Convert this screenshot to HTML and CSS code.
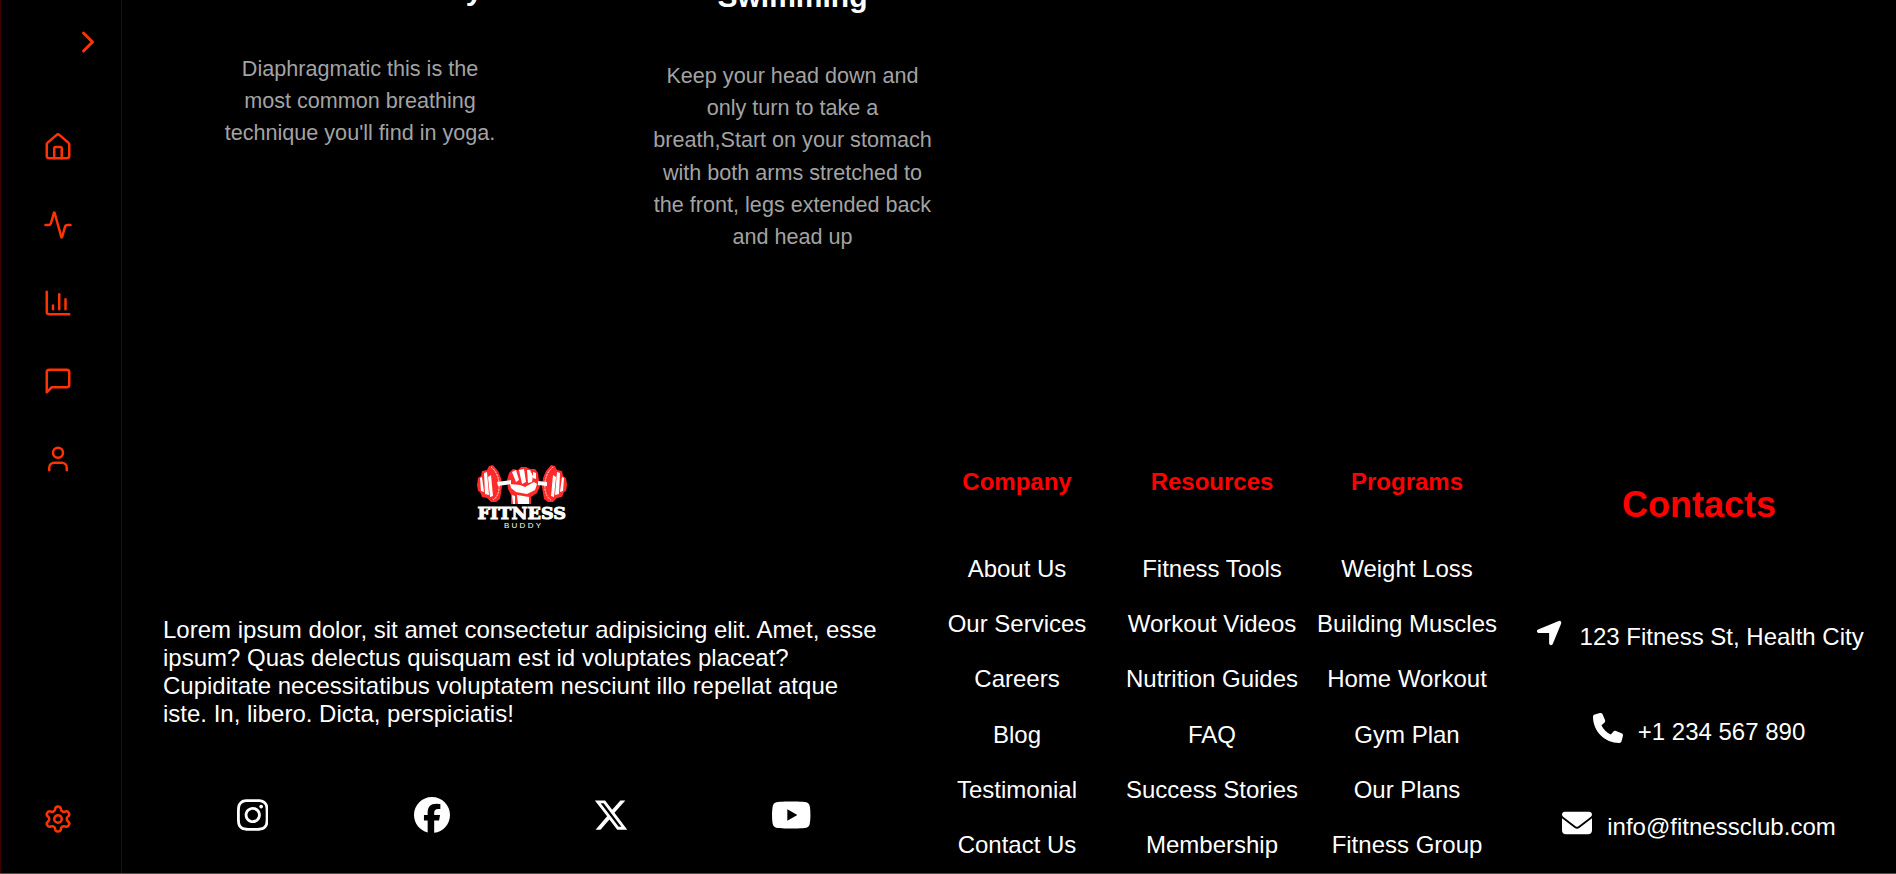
FILE: index.html
```html
<!DOCTYPE html>
<html lang="en">
<head>
<meta charset="utf-8">
<title>Fitness Buddy</title>
<link rel="stylesheet" href="styles.css">
</head>
<body>
<div class="app">
  <nav class="sidebar">
    <a class="toggle"><svg class="chevron" viewBox="0 0 24 24"><path d="m9 18 6-6-6-6"/></svg></a>
    <div class="menu">
      <svg viewBox="0 0 24 24"><path d="M15 21v-8a1 1 0 0 0-1-1h-4a1 1 0 0 0-1 1v8"/><path d="M3 10a2 2 0 0 1 .709-1.528l7-5.999a2 2 0 0 1 2.582 0l7 5.999A2 2 0 0 1 21 10v9a2 2 0 0 1-2 2H5a2 2 0 0 1-2-2z"/></svg>
      <svg viewBox="0 0 24 24"><path d="M22 12h-2.48a2 2 0 0 0-1.93 1.46l-2.35 8.36a.25.25 0 0 1-.48 0L9.24 2.18a.25.25 0 0 0-.48 0l-2.35 8.36A2 2 0 0 1 4.49 12H2"/></svg>
      <svg viewBox="0 0 24 24"><path d="M3 3v16a2 2 0 0 0 2 2h16M18 17V9M13 17V5M8 17v-3"/></svg>
      <svg viewBox="0 0 24 24"><path d="M21 15a2 2 0 0 1-2 2H7l-4 4V5a2 2 0 0 1 2-2h14a2 2 0 0 1 2 2z"/></svg>
      <svg viewBox="0 0 24 24"><path d="M19 21v-2a4 4 0 0 0-4-4H9a4 4 0 0 0-4 4v2"/><circle cx="12" cy="7" r="4"/></svg>
    </div>
    <svg class="settings" viewBox="0 0 24 24"><path d="M9.671 4.136a2.34 2.34 0 0 1 4.659 0 2.34 2.34 0 0 0 3.319 1.915 2.34 2.34 0 0 1 2.33 4.033 2.34 2.34 0 0 0 0 3.831 2.34 2.34 0 0 1-2.33 4.033 2.34 2.34 0 0 0-3.319 1.915 2.34 2.34 0 0 1-4.659 0 2.34 2.34 0 0 0-3.32-1.915 2.34 2.34 0 0 1-2.33-4.033 2.34 2.34 0 0 0 0-3.831A2.34 2.34 0 0 1 6.35 6.051a2.34 2.34 0 0 0 3.319-1.915"/><circle cx="12" cy="12" r="3"/></svg>
  </nav>
  <main class="content">
    <section class="cards">
      <article class="card card-yoga">
        <h3>y</h3>
        <p>Diaphragmatic this is the<br>most common breathing<br>technique you'll find in yoga.</p>
      </article>
      <article class="card card-swim">
        <h3>Swimming</h3>
        <p>Keep your head down and<br>only turn to take a<br>breath,Start on your stomach<br>with both arms stretched to<br>the front, legs extended back<br>and head up</p>
      </article>
    </section>
    <footer class="footer">
      <div class="about">
        <svg class="logo" viewBox="0 0 92 66">
          <g fill="#ff2b2b">
            <path d="M2 13 5 11 6 6 11 5 13 1 17 0 22 6 25 13 26 22 24 34 20 37 15 37 11 33 6 32 4 27 2 26 1 20z"/>
            <path d="M90 13 87 11 86 6 81 5 79 1 75 0 70 6 67 13 66 22 68 34 72 37 77 37 81 33 86 32 88 27 90 26 91 20z"/>
            <path d="M33 8 37 4 42 5 45 2 50 2 54 4 59 4 62 8 63 16 64 21 61 28 55 32 55 39 35 39 35 30 32 24 31 15z"/>
          </g>
          <g fill="#fff">
            <path d="M4 13 6 12 8 27 5 26zM8 8 11 7 13 30 9 29zM12 12 15 10 17 31 14 32zM88 13 86 12 84 27 87 26zM84 8 81 7 79 30 83 29zM80 12 77 10 75 31 78 32z"/>
            <path d="M21 17 35 15 35 19 22 21zM71 17 62 16 62 20 71 21z"/>
            <path d="M36 7 40 5 43 15 40 17zM43 5 48 4 50 17 46 19zM51 5 54 5 57 11 56 17 52 18zM57 7 60 8 60 14 57 13z"/>
            <path d="M34 19 44 20 49 22 58 17 61 19 59 25 51 29 40 27 35 23zM41 30 53 32 53 39 42 39zM36 30 39 31 39 39 37 39z"/>
          </g>
          <g fill="none" stroke="#fff" stroke-width=".9" stroke-dasharray="2 1">
            <path d="M15 2q9 7 8 22q-1 8-6 11M77 2q-9 7-8 22q1 8 6 11"/>
          </g>
          <g class="logo-text">
            <text class="logo-name" x="1.500" y="53.5" textLength="88.500" lengthAdjust="spacingAndGlyphs">FITNESS</text>
            <text class="logo-sub" x="28" y="63" textLength="37">BUDDY</text>
          </g>
        </svg>
        <p>Lorem ipsum dolor, sit amet consectetur adipisicing elit. Amet, esse<br>ipsum? Quas delectus quisquam est id voluptates placeat?<br>Cupiditate necessitatibus voluptatem nesciunt illo repellat atque<br>iste. In, libero. Dicta, perspiciatis!</p>
        <div class="social">
          <svg class="w448" viewBox="0 0 448 512"><path d="M224.1 141c-63.6 0-114.900 51.300-114.900 114.900s51.300 114.900 114.900 114.900S339 319.500 339 255.900 287.700 141 224.100 141zm0 189.600c-41.100 0-74.700-33.500-74.700-74.700s33.500-74.700 74.700-74.700 74.700 33.500 74.700 74.700-33.600 74.700-74.700 74.700zm146.400-194.300c0 14.900-12 26.800-26.800 26.800-14.900 0-26.800-12-26.800-26.800s12-26.800 26.800-26.800 26.800 12 26.800 26.800zm76.100 27.200c-1.700-35.900-9.900-67.700-36.200-93.900-26.200-26.200-58-34.400-93.900-36.200-37-2.100-147.900-2.100-184.900 0-35.800 1.700-67.600 9.900-93.900 36.100s-34.400 58-36.200 93.900c-2.100 37-2.100 147.900 0 184.900 1.700 35.900 9.900 67.700 36.200 93.900s58 34.400 93.900 36.200c37 2.100 147.900 2.100 184.900 0 35.900-1.700 67.700-9.900 93.900-36.200 26.200-26.200 34.400-58 36.200-93.900 2.100-37 2.100-147.800 0-184.800zM398.800 388c-7.800 19.600-22.900 34.700-42.600 42.600-29.500 11.700-99.500 9-132.100 9s-102.700 2.600-132.100-9c-19.600-7.800-34.700-22.900-42.600-42.600-11.700-29.500-9-99.500-9-132.100s-2.600-102.700 9-132.100c7.800-19.600 22.900-34.700 42.600-42.600 29.500-11.700 99.500-9 132.100-9s102.700-2.600 132.100 9c19.600 7.800 34.700 22.900 42.600 42.600 11.700 29.500 9 99.500 9 132.100s2.700 102.700-9 132.100z"/></svg>
          <svg viewBox="0 0 512 512"><path d="M512 256C512 114.600 397.400 0 256 0S0 114.600 0 256C0 376 82.700 476.800 194.200 504.500V334.200H141.400V256h52.800V222.300c0-87.100 39.400-127.500 125-127.500c16.200 0 44.200 3.200 55.700 6.400V172c-6-.6-16.500-1-29.600-1c-42 0-58.200 15.900-58.200 57.200V256h83.600l-14.400 78.200H287V510.100C413.800 494.800 512 386.900 512 256h0z"/></svg>
          <svg viewBox="0 0 512 512"><path d="M389.200 48h70.600L305.600 224.200 487 464H345L233.700 318.600 106.500 464H35.800L200.700 275.500 26.800 48H172.400L272.900 180.900 389.200 48zM364.400 421.800h39.100L151.100 88h-42L364.400 421.800z"/></svg>
          <svg class="w576" viewBox="0 0 576 512"><path d="M549.700 124.100c-6.300-23.700-24.800-42.300-48.300-48.600C458.800 64 288 64 288 64S117.200 64 74.600 75.500c-23.500 6.300-42 24.900-48.300 48.600-11.400 42.900-11.400 132.300-11.400 132.300s0 89.400 11.400 132.300c6.300 23.700 24.800 41.500 48.300 47.800C117.200 448 288 448 288 448s170.800 0 213.400-11.500c23.500-6.300 42-24.200 48.300-47.800 11.400-42.900 11.400-132.300 11.400-132.300s0-89.400-11.400-132.300zM232.200 337.600V175.200l142.700 81.200z"/></svg>
        </div>
      </div>
      <div class="links">
        <div class="column"><h4>Company</h4><a>About Us</a><a>Our Services</a><a>Careers</a><a>Blog</a><a>Testimonial</a><a>Contact Us</a></div>
        <div class="column"><h4>Resources</h4><a>Fitness Tools</a><a>Workout Videos</a><a>Nutrition Guides</a><a>FAQ</a><a>Success Stories</a><a>Membership</a></div>
        <div class="column"><h4>Programs</h4><a>Weight Loss</a><a>Building Muscles</a><a>Home Workout</a><a>Gym Plan</a><a>Our Plans</a><a>Fitness Group</a></div>
      </div>
      <div class="contacts">
        <h2>Contacts</h2>
        <div class="contact address"><svg class="w448" viewBox="0 0 448 512"><path d="M429.600 92.100c4.900-11.900 2.100-25.600-7-34.700s-22.800-11.900-34.700-7l-352 144c-14.200 5.800-22.200 20.800-19.300 35.800s16.100 25.800 31.400 25.800H224V432c0 15.300 10.800 28.400 25.800 31.400s30-5.100 35.800-19.300l144-352z"/></svg><span>123 Fitness St, Health City</span></div>
        <div class="contact"><svg viewBox="0 0 512 512"><path d="M164.900 24.600c-7.700-18.600-28-28.500-47.400-23.200l-88 24C12.100 30.200 0 46 0 64C0 311.400 200.600 512 448 512c18 0 33.800-12.100 38.600-29.500l24-88c5.300-19.400-4.600-39.700-23.200-47.400l-96-40c-16.300-6.800-35.200-2.100-46.300 11.600L304.700 368C234.300 334.700 177.300 277.700 144 207.300L193.300 167c13.700-11.200 18.400-30 11.600-46.300l-40-96z"/></svg><span>+1 234 567 890</span></div>
        <div class="contact"><svg viewBox="0 0 512 512"><path d="M48 64C21.500 64 0 85.500 0 112c0 15.100 7.100 29.300 19.200 38.400L236.800 313.600c11.400 8.500 27 8.500 38.400 0L492.800 150.400c12.100-9.100 19.200-23.300 19.200-38.400c0-26.500-21.500-48-48-48H48zM0 176V384c0 35.300 28.700 64 64 64H448c35.300 0 64-28.700 64-64V176L294.400 339.200c-22.800 17.100-54 17.100-76.800 0L0 176z"/></svg><span>info@fitnessclub.com</span></div>
      </div>
    </footer>
  </main>
</div>
</body>
</html>
```

FILE: styles.css
```css
* { box-sizing: border-box; margin: 0; padding: 0; }
body {
  height: 874px;
  overflow: hidden;
  background: #000;
  color: #fff;
  font: 24px/28px "Liberation Sans", Arial, sans-serif;
}
svg { display: block; flex: none; }
.app { display: flex; height: 874px; border-bottom: 1px solid #564a48; }

.sidebar {
  display: flex;
  flex-direction: column;
  align-items: center;
  width: 122px;
  padding: 24px 7px 39px 0;
  border-left: 1px solid #400000;
  border-right: 1px solid #400000;
}
.sidebar svg {
  width: 30px;
  height: 30px;
  fill: none;
  stroke: #ff3300;
  stroke-width: 2;
  stroke-linecap: round;
  stroke-linejoin: round;
}
.toggle { margin-left: 60px; }
.sidebar .chevron { width: 36px; height: 36px; }
.menu { display: flex; flex-direction: column; gap: 48px; margin-top: 72px; }
.settings { margin-top: auto; }

.content { flex: 1; display: flex; flex-direction: column; }
.cards { display: flex; flex: none; height: 448px; padding-left: 88px; gap: 132.500px; }
.card { width: 300px; text-align: center; }
.card h3 { font-size: 30px; line-height: 36px; white-space: nowrap; }
.card p { color: #a3a3a3; font-size: 21.600px; line-height: 32.200px; white-space: nowrap; }
.card-yoga h3 { margin-top: -28px; padding-left: 228px; }
.card-yoga p { margin-top: 45px; }
.card-swim h3 { margin-top: -21px; }
.card-swim p { margin-top: 45px; }

.footer { flex: none; display: flex; height: 425px; }
.about { display: flex; flex-direction: column; width: 716px; margin-left: 41px; white-space: nowrap; }
.logo { width: 92px; height: 66px; margin: 17px 0 0 313px; }
.logo-text { fill: #fff; }
.logo-name { font: bold 17.500px "DejaVu Serif", serif; stroke: #fff; stroke-width: 1px; }
.logo-sub { font: 8px "Liberation Sans", Arial, sans-serif; }
.about p { margin-top: 85px; }
.social { display: grid; grid-template-columns: repeat(4, 179.400px); justify-items: center; margin-top: 69px; }
.social svg { width: 36px; height: 36px; fill: #fff; }
.social .w448 { width: 31.500px; }
.social .w576 { width: 40.500px; }

.links { display: grid; grid-template-columns: repeat(3, 195px); margin-left: 40.500px; padding-top: 20px; }
.column { display: flex; flex-direction: column; align-items: center; white-space: nowrap; }
.column h4 { font-size: 24px; line-height: 28px; margin-bottom: 45px; }
.column a { line-height: 55.200px; }
.column h4, .contacts h2 { color: #f00; }

.contacts { display: flex; flex-direction: column; align-items: center; width: 389px; padding-top: 36px; }
.contacts h2 { font-size: 36px; line-height: 42px; margin-bottom: 75px; }
.contact { display: flex; flex: none; gap: 15px; height: 95px; padding-top: 17px; white-space: nowrap; }
.contact svg { width: 30px; height: 30px; fill: #fff; }
.contact .w448 { width: 26.250px; }
.contact span { padding-top: 5px; }
.address { gap: 17px; margin-left: 2px; }
```
